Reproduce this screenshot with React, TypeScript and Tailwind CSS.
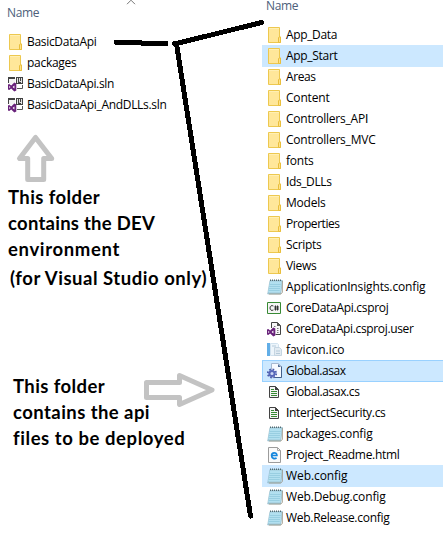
import { useLayoutEffect, useRef } from "react";

type Kind = "folder" | "sln" | "config" | "csproj" | "user" | "ico" | "asax" | "cs" | "html";
type Item = { name: string; kind: Kind; width: number; mark?: "selected" | "focused" };

const solution: Item[] = [
  { name: "BasicDataApi", kind: "folder", width: 69.5 },
  { name: "packages", kind: "folder", width: 49.5 },
  { name: "BasicDataApi.sln", kind: "sln", width: 87 },
  { name: "BasicDataApi_AndDLLs.sln", kind: "sln", width: 139.5 },
];

const project: Item[] = [
  { name: "App_Data", kind: "folder", width: 51 },
  { name: "App_Start", kind: "folder", width: 51.5, mark: "selected" },
  { name: "Areas", kind: "folder", width: 29.5 },
  { name: "Content", kind: "folder", width: 43.5 },
  { name: "Controllers_API", kind: "folder", width: 82 },
  { name: "Controllers_MVC", kind: "folder", width: 89.5 },
  { name: "fonts", kind: "folder", width: 27.5 },
  { name: "Ids_DLLs", kind: "folder", width: 45.5 },
  { name: "Models", kind: "folder", width: 39.5 },
  { name: "Properties", kind: "folder", width: 53.5 },
  { name: "Scripts", kind: "folder", width: 35.5 },
  { name: "Views", kind: "folder", width: 30.5 },
  { name: "ApplicationInsights.config", kind: "config", width: 139.5 },
  { name: "CoreDataApi.csproj", kind: "csproj", width: 102.5 },
  { name: "CoreDataApi.csproj.user", kind: "user", width: 127.5 },
  { name: "favicon.ico", kind: "ico", width: 58.5 },
  { name: "Global.asax", kind: "asax", width: 59.5, mark: "focused" },
  { name: "Global.asax.cs", kind: "cs", width: 73.5 },
  { name: "InterjectSecurity.cs", kind: "cs", width: 99.5 },
  { name: "packages.config", kind: "config", width: 86.5 },
  { name: "Project_Readme.html", kind: "html", width: 113.5 },
  { name: "Web.config", kind: "config", width: 61.5, mark: "selected" },
  { name: "Web.Debug.config", kind: "config", width: 99.5 },
  { name: "Web.Release.config", kind: "config", width: 103.5 },
];

/**
 * One line of text whose letter spacing is tuned so that it spans `width` pixels.
 * The capital I is set in a face that draws it without serifs.
 */
function FitText({ text, width, className = "" }: { text: string; width: number; className?: string }) {
  const ref = useRef<HTMLSpanElement>(null);
  useLayoutEffect(() => {
    const el = ref.current;
    if (!el) return;
    el.style.letterSpacing = "0px";
    const natural = el.getBoundingClientRect().width;
    el.style.letterSpacing = `${(width - natural) / text.length}px`;
  }, [text, width]);
  return (
    <span ref={ref} className={`inline-block whitespace-pre ${className}`}>
      {text.split(/(I)/).map((part, i) =>
        part === "I" ? (
          <span key={i} className="font-['Liberation_Sans',sans-serif] leading-none">
            I
          </span>
        ) : (
          part
        ),
      )}
    </span>
  );
}

function VsMark() {
  return (
    <path fill="#68217a" fillRule="evenodd" d="M0 8.5 1.2 8l2 1.6L6.3 6.5 8.3 7.4v7.2l-2 .9-3.1-3.1-2 1.6L0 13.5ZM1.3 9.8v2.4L2.5 11ZM4.6 11l1.8 1.5v-3Z" />
  );
}

function FileIcon({ kind }: { kind: Kind }) {
  return (
    <svg viewBox="0 0 16 16" className="size-4 shrink-0">
      {kind === "folder" && (
        <>
          <path d="M1.5.5h11v9.5h1v5.5h-12Z" fill="#ffe79a" stroke="#edc84f" />
          <path d="M2 1h10v1H2Z" fill="#ffefb4" />
          <path d="M11.5 15.5v-4.8l.7-.7h1.3v5.5Z" fill="#ffe28a" stroke="#e9be3c" />
        </>
      )}
      {kind === "sln" && (
        <>
          <path d="M1 3h6v5H1Z" fill="#f3f3f3" />
          <path d="M0 1h7v2H0ZM0 3h1v4H0Z" fill="#424242" />
          <path d="M8 1h7v7H8Z" fill="#424242" />
          <path d="M9.5 2v5M11.5 2v3.5h2M13.5 2v5" fill="none" stroke="#f5f5f5" strokeWidth=".9" />
          <path d="M9 12.5h5.5V9" stroke="#555" fill="none" />
          <VsMark />
        </>
      )}
      {kind === "config" && (
        <>
          <path d="M3 1.5h12.5L13.7 15H.7Z" fill="#a9d3e3" stroke="#8ab2c2" strokeWidth=".6" />
          <path d="m3 2.8 11.8.1L13.3 13H1.2Z" fill="#b2e0f0" />
          <path d="M2.7 5.5h11M2.3 7.5h11M2 9.5h11M1.7 11.5h11" stroke="#8dc6da" strokeWidth=".7" />
          <path d="M15.4 2v11.5L13.7 15H2" fill="none" stroke="#9d9481" strokeWidth=".8" />
          <path d="M3 1.2h12" stroke="#536b72" strokeWidth="1.4" strokeDasharray="1 1" />
        </>
      )}
      {kind === "csproj" && (
        <>
          <path d="M.5 2.5h13v11H.5Z" fill="#f5f5f5" stroke="#388a34" />
          <path d="M6.4 6C4.5 5 3 6 3 8s1.5 3 3.4 2M8.5 5.5v5M10.5 5.5v5M7.2 7h4.8M7.2 9h4.8" fill="none" stroke="#333" />
        </>
      )}
      {kind === "user" && (
        <>
          <path d="M4.5 7V1.5h6l3 3v9h-5" fill="#f6f6f6" stroke="#424242" />
          <path d="M10 1v4h4" fill="#555" />
          <path d="M7 5.5h2M10 7.5h2M10 9.5h2M10 11.5h2" stroke="#777" strokeDasharray="1 .5" />
          <VsMark />
        </>
      )}
      {kind === "ico" && (
        <>
          <path d="M0 1h3v13H0Z" fill="#62aee7" />
          <path d="M3.5 1.5h7l1 1v11h-8Z" fill="#edf5fb" stroke="#d1e2ef" />
          <path d="M7.5 5.5h5l2 2v6h-7Z" fill="#e2ebf2" stroke="#c5d5e1" />
          <path d="M9 9h4M9 11.5h4M5 4h4" stroke="#b5cad9" />
        </>
      )}
      {kind === "asax" && (
        <>
          <path d="M4.5.5h7l3 3v11h-10Z" fill="#f7faff" stroke="#a7b9d1" />
          <path d="M14.5 3.5v11H7" fill="none" stroke="#425f89" />
          <path d="M11 1v3h3Z" fill="#506d97" />
          <circle cx="5" cy="10.5" r="4.2" fill="none" stroke="#4b5cad" strokeWidth="1.8" strokeDasharray="1.7 1.6" />
          <circle cx="5" cy="10.5" r="2.6" fill="#cdd8f4" stroke="#5666b8" strokeWidth="2" />
        </>
      )}
      {kind === "cs" && (
        <>
          <path d="M2.5 2.5h6l3 3v8h-9Z" fill="#f5f5f5" stroke="#424242" />
          <path d="M8 2v4h4Z" fill="#424242" />
          <path d="M4 5.5h3M4 7.5h6M4 9.5h6M4 11.5h6" stroke="#388a34" />
        </>
      )}
      {kind === "html" && (
        <>
          <path d="M1.5.5h9l3 3v12h-12Z" fill="#fafafa" stroke="#9c9c9c" />
          <path d="M10.5.5v3h3" fill="none" stroke="#aaa" />
          <path d="M4.7 8.5h5.2C9.9 4.8 4.6 5 4.6 8.6c0 3.2 3.1 3.5 5 2.4" fill="none" stroke="#1686dd" strokeWidth="1.7" />
        </>
      )}
    </svg>
  );
}

const markStyle = {
  selected: "bg-[#cce8ff]",
  focused: "bg-[#cce8ff] shadow-[inset_1px_1px_#99d1ff,inset_0_-1px_#99d1ff]",
};

function FileList({ items, iconInset }: { items: Item[]; iconInset: string }) {
  return (
    <ul>
      {items.map((item) => (
        <li key={item.name} className="h-[21px]">
          <div className={`flex h-[22px] items-center gap-[3px] ${iconInset} ${item.mark ? markStyle[item.mark] : ""}`}>
            <FileIcon kind={item.kind} />
            <FitText text={item.name} width={item.width} className="text-[12px] leading-[20px]" />
          </div>
        </li>
      ))}
    </ul>
  );
}

const noteFont = "font-['Lato','Liberation_Sans',sans-serif] font-bold text-[18.5px] leading-[26px]";

export default function App() {
  return (
    <main className="relative flex h-[534px] w-[443px] overflow-hidden bg-white font-['Open_Sans','Noto_Sans',sans-serif] text-black">
      <section className="w-[262px] shrink-0">
        <header className="flex h-[31px] pt-[4px] pl-[7px] text-[12px] leading-[18px] text-[#4c607a]">
          <FitText text="Name" width={32} />
          <svg viewBox="0 0 10 6" className="-mt-[5px] ml-[87px] h-[6px] w-[10px]">
            <path d="m1 5.2 4-4 4 4" fill="none" stroke="#777" />
          </svg>
        </header>
        <FileList items={solution} iconInset="pl-2" />
        <div className={`flex flex-col items-start pt-[69px] pl-2 ${noteFont}`}>
          <FitText text="This folder" width={92} />
          <FitText text="contains the DEV" width={147} />
          <FitText text="environment" width={112} />
          <FitText text="(for Visual Studio only)" width={197} className="mt-[3px] ml-[2px]" />
        </div>
        <div className={`flex flex-col items-start pt-[82px] pl-[13px] ${noteFont}`}>
          <FitText text="This folder" width={92} />
          <FitText text="contains the api" width={137} />
          <FitText text="files to be deployed" width={172} />
        </div>
      </section>
      <section className="min-w-0 flex-1">
        <header className="flex h-6 items-start pl-1 text-[12px] leading-[12px] text-[#4c607a]">
          <FitText text="Name" width={32} />
        </header>
        <FileList items={project} iconInset="pl-[5px]" />
      </section>
      <svg viewBox="0 0 443 534" className="pointer-events-none absolute inset-0 h-[534px] w-[443px]" fill="none" shapeRendering="crispEdges">
        <g stroke="#000" strokeWidth="5" strokeLinecap="round" strokeLinejoin="round">
          <path d="M116 42.3h24M143 43.5h23" />
          <path d="M174.5 43.5h2L261.5 22.5M176.5 44 250.5 516" />
        </g>
        <g stroke="#c3c3c3" strokeWidth="5" strokeLinejoin="round" shapeRendering="auto">
          <path d="M35.5 137.5 19.5 158.5h8.2v21h16v-21h8Z" />
          <path d="M146.5 382.5h33v-7l32.5 14.5-32.5 14.5v-7h-33Z" />
        </g>
      </svg>
    </main>
  );
}
